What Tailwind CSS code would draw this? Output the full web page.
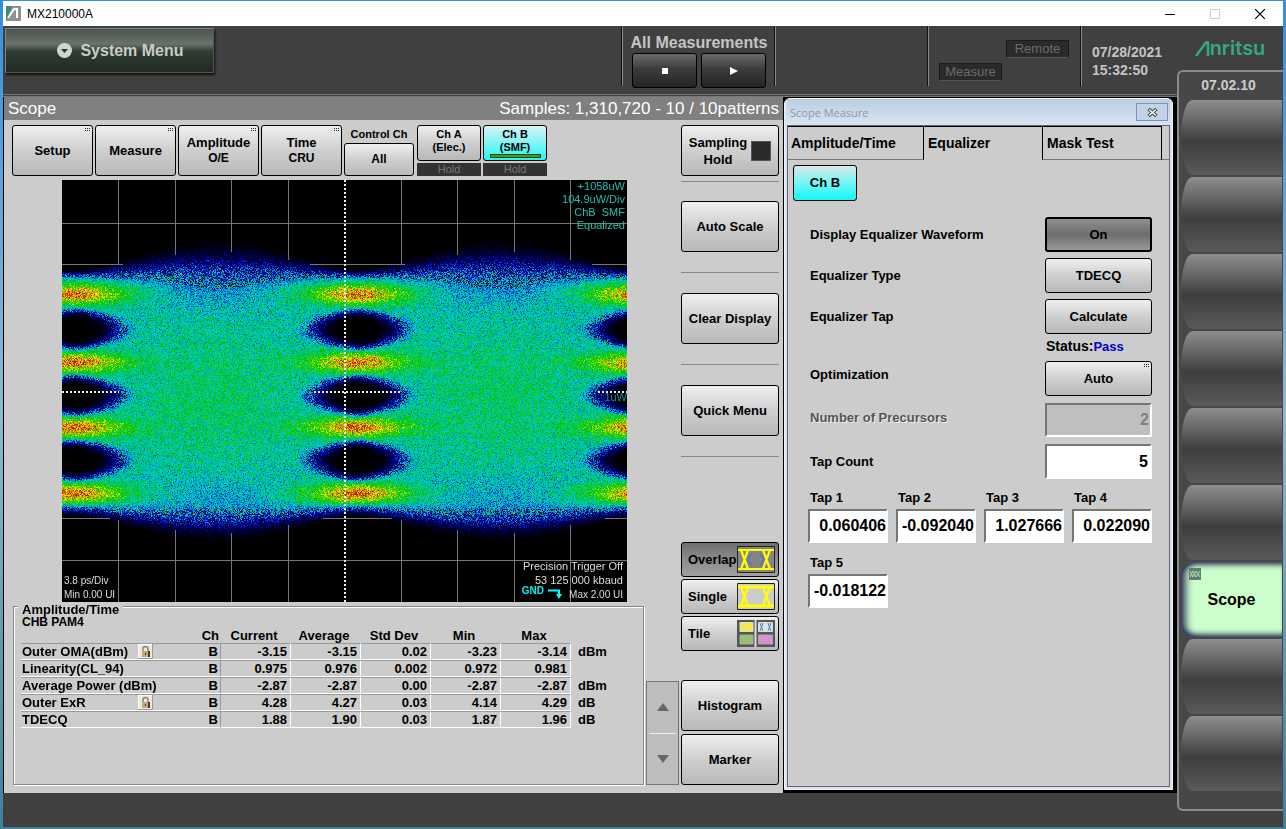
<!DOCTYPE html>
<html lang="en">

<head>
    <meta charset="UTF-8">
    <meta name="viewport" content="width=device-width, initial-scale=1.0">
    <title>MX210000A</title>
    <script src="https://cdn.jsdelivr.net/npm/@tailwindcss/browser@4"></script>
    <style>
        body {
            font-family: 'Liberation Sans', Arial, sans-serif;
        }
    </style>
</head>

<body class="flex h-screen flex-col bg-linear-to-b from-[#2f8fe0] via-[#8fb9cf] to-[#3f8099] pt-px pr-[3px] pb-[2px] pl-[3px] text-[13px] font-bold text-black">
    <svg class="hidden">
        <symbol id="dots" viewBox="0 0 5 3">
            <path d="M0 0h1v1H0zM2 0h1v1H2zM4 0h1v1H4zM0 2h1v1H0zM2 2h1v1H2zM4 2h1v1H4z" fill="#222" />
        </symbol>
        <symbol id="lock" viewBox="0 0 15 15">
            <path d="M0 0h15v15H0z" fill="#eee9dd" />
            <path d="M.5 14.500V.5h14" fill="none" stroke="#fff" />
            <path d="M14.500 0v14.500H0" fill="none" stroke="#999" />
            <path d="M5 7V5a2.500 2.500 0 0 1 5 0v2" fill="none" stroke="#8a8578" stroke-width="1.500" />
            <path d="M4 7h7v6H4z" fill="#c9a877" />
            <path d="M10 7h2v6h-2z" fill="#4a3a22" />
            <path d="M7 9h1v2H7z" fill="#4a3a22" />
        </symbol>
    </svg>

    <header class="flex h-[25px] shrink-0 items-center bg-white pl-[3px]">
        <svg class="h-[15px] w-[15px]" viewBox="0 0 15 15">
            <path d="M0 0h15v15H0z" fill="#8b9490" />
            <path d="M0 0h6L0 15z" fill="#3d8a78" />
            <path d="M2 12L8 3h3v9" fill="none" stroke="#fff" stroke-width="2" />
        </svg>
        <h1 class="ml-1.5 flex-1 text-[12px] font-normal">MX210000A</h1>
        <button aria-label="Minimize" class="flex w-[45px] justify-center">
            <svg class="h-2.5 w-2.5" viewBox="0 0 10 10"><path d="M0 5.500h10" stroke="#000" /></svg>
        </button>
        <button aria-label="Maximize" class="flex w-[45px] justify-center">
            <svg class="h-2.5 w-2.5" viewBox="0 0 10 10"><path d="M.5.5h9v9h-9z" fill="none" stroke="#ccc" /></svg>
        </button>
        <button aria-label="Close" class="flex w-[46px] justify-center">
            <svg class="h-2.5 w-2.5" viewBox="0 0 10 10"><path d="M0 0l10 10M10 0L0 10" stroke="#000" stroke-width="1.200" /></svg>
        </button>
    </header>

    <div class="flex min-h-0 flex-1 bg-[#404040]">
        <div class="flex min-w-0 flex-1 flex-col">
            <!-- top bar -->
            <div class="flex h-[71px] shrink-0 border-b-[3px] border-double border-[#777] text-[#c4c4c4]">
                <button class="mt-0.5 ml-0.5 flex h-[45px] w-[209px] items-center justify-center gap-2 border border-[#7d857d] border-r-[#555] border-b-[#555] bg-[linear-gradient(#4b544c,#6a736b_35%,#303c32_52%,#202a22)] pl-[22px] text-[16px] text-[#c8cdc8] shadow-[1px_2px_2px_#111]">
                    <svg class="h-[15px] w-[15px]" viewBox="0 0 15 15">
                        <circle cx="7.500" cy="7.500" r="7.500" fill="#d0d5d0" />
                        <path d="M4 6h7l-3.500 4z" fill="#2c382f" />
                    </svg>
                    System Menu
                </button>
                <div class="flex-1"></div>
                <div class="flex h-[60px] w-[154px] flex-col items-center border-x border-[#8a8a8a] pt-[7px] shadow-[-1px_0_0_#111,inset_-1px_0_0_#111]">
                    <h2 class="h-[22px] text-[16px] leading-[20px]">All Measurements</h2>
                    <div class="flex gap-1">
                        <button aria-label="Stop" class="flex h-[35px] w-[65px] items-center justify-center rounded-[3px] border border-black bg-[linear-gradient(#6c6c6c,#3c3c3c_45%,#242424)]">
                            <svg class="h-1.5 w-1.5" viewBox="0 0 6 6"><path d="M0 0h6v6H0z" fill="#fff" /></svg>
                        </button>
                        <button aria-label="Run" class="flex h-[35px] w-[65px] items-center justify-center rounded-[3px] border border-black bg-[linear-gradient(#6c6c6c,#3c3c3c_45%,#242424)]">
                            <svg class="h-2 w-2" viewBox="0 0 8 8"><path d="M0 0l8 4-8 4z" fill="#fff" /></svg>
                        </button>
                    </div>
                </div>
                <div class="w-[152px]"></div>
                <div class="flex h-[60px] w-[154px] flex-col border-x border-[#8a8a8a] pt-[14px] pr-3 pl-2.5 font-normal text-[#6c6c6c] shadow-[-1px_0_0_#111,inset_-1px_0_0_#111]">
                    <span class="h-[18px] w-[63px] self-end border border-[#1c1c1c] border-b-[#555] bg-[#2a2a2a] text-center leading-[16px]">Remote</span>
                    <span class="mt-[5px] h-[18px] w-[63px] border border-[#1c1c1c] border-b-[#555] bg-[#2a2a2a] text-center leading-[16px]">Measure</span>
                </div>
                <p class="w-[95px] pt-[17px] pl-2.5 text-[14px] leading-[18px]">07/28/2021<br>15:32:50</p>
            </div>

            <div class="flex min-h-0 flex-1 bg-black pr-1 pl-px">
                <!-- scope -->
                <section class="flex min-w-0 flex-1 flex-col bg-[#ccc]">
                    <div class="flex h-[23px] shrink-0 items-center justify-between bg-[#808080] px-1 text-[17px] font-normal text-white">
                        <h2>Scope</h2>
                        <span>Samples: 1,310,720 - 10 / 10patterns</span>
                    </div>
                    <div class="flex min-h-0 flex-1 gap-0.5 px-1 pt-[5px] pb-2">
                        <div class="flex min-w-0 flex-1 flex-col pl-1">
                            <div class="flex h-[51px] shrink-0 gap-0.5 leading-[15px]">
                                <button class="relative w-[81px] rounded-[3px] border border-black bg-[linear-gradient(#efefef,#cfcfcf_50%,#b8b8b8)]">Setup
                                    <svg class="absolute top-0.5 right-0.5 h-[3px] w-[5px]"><use href="#dots" /></svg>
                                </button>
                                <button class="relative w-[81px] rounded-[3px] border border-black bg-[linear-gradient(#efefef,#cfcfcf_50%,#b8b8b8)]">Measure
                                    <svg class="absolute top-0.5 right-0.5 h-[3px] w-[5px]"><use href="#dots" /></svg>
                                </button>
                                <button class="relative w-[81px] rounded-[3px] border border-black bg-[linear-gradient(#efefef,#cfcfcf_50%,#b8b8b8)]">Amplitude<br><span class="text-[12px]">O/E</span>
                                    <svg class="absolute top-0.5 right-0.5 h-[3px] w-[5px]"><use href="#dots" /></svg>
                                </button>
                                <button class="relative w-[81px] rounded-[3px] border border-black bg-[linear-gradient(#efefef,#cfcfcf_50%,#b8b8b8)]">Time<br><span class="text-[12px]">CRU</span>
                                    <svg class="absolute top-0.5 right-0.5 h-[3px] w-[5px]"><use href="#dots" /></svg>
                                </button>
                                <div class="flex w-[70px] flex-col text-[11px]">
                                    <label for="control-ch" class="h-[18px] text-center leading-[18px]">Control Ch</label>
                                    <button id="control-ch" class="flex-1 rounded-[3px] border border-black bg-[linear-gradient(#efefef,#cfcfcf_50%,#b8b8b8)] text-[12px]">All</button>
                                </div>
                                <div class="ml-px flex w-16 flex-col gap-0.5 text-[11px] leading-[13px]">
                                    <button class="h-9 rounded-[3px] border border-black bg-[linear-gradient(#efefef,#cfcfcf_50%,#b8b8b8)] pb-1">Ch A<br>(Elec.)</button>
                                    <button disabled class="flex-1 bg-[#333] font-normal text-[#777]">Hold</button>
                                </div>
                                <div class="flex w-16 flex-col gap-0.5 text-[11px] leading-[13px]">
                                    <button class="h-9 rounded-[3px] border border-black bg-[linear-gradient(#d8f4f4,#7ff5f5_50%,#28f4f4)]">Ch B<br>(SMF)
                                        <span class="mx-auto block h-1 w-[51px] border border-[#1d4a10] bg-[#4a9a20]"></span>
                                    </button>
                                    <button disabled class="flex-1 bg-[#333] font-normal text-[#777]">Hold</button>
                                </div>
                            </div>

                            <!-- eye diagram -->
                            <div class="relative mt-1 mr-[17px] ml-[50px] min-h-0 flex-1 bg-black text-[11px] font-normal">
                                <canvas id="eye" width="565" height="422" class="block h-full w-full"></canvas>
                                <p class="absolute top-0 right-0.5 text-right leading-[13px] text-[#20c0b0]">+1058uW<br>104.9uW/Div<br>ChB&nbsp; SMF<br>Equalized</p>
                                <p class="absolute top-[209px] right-0 text-[#1890a0]">1uW</p>
                                <p class="absolute bottom-0 left-0.5 text-[10px] leading-[14px] text-[#ddd]">3.8 ps/Div<br>Min 0.00 UI</p>
                                <p class="absolute right-1 bottom-0 text-right text-[11px] leading-[14px] text-[#ddd]">Precision Trigger Off<br>53 125 000 kbaud<br><span class="text-[10px]">Max 2.00 UI</span></p>
                                <p class="absolute right-[65px] bottom-[3px] flex items-center gap-1 text-[10px] leading-[14px] font-bold text-[#00f0f0]">GND
                                    <svg class="mt-1.5 h-[10px] w-[14px]" viewBox="0 0 14 10"><path d="M0 1.500h11V6" fill="none" stroke="#0ff" stroke-width="2" /><path d="M8 5h6l-3 5z" fill="#0ff" /></svg>
                                </p>
                            </div>

                            <fieldset class="relative mt-1 ml-px h-[179px] shrink-0 border border-[#888] pt-[9px] pl-[7px] shadow-[1px_1px_0_#fff,inset_1px_1px_0_#fff]">
                                <legend class="absolute -top-1 left-1 bg-[#ccc] px-1 leading-[13px]">Amplitude/Time</legend>
                                <p class="pl-px text-[12px] leading-[13px]">CHB PAM4</p>
                                <table class="border-separate border-spacing-0 text-right text-[13px] leading-[15px]">
                                    <thead>
                                        <tr class="h-[14px] text-center leading-[12px]">
                                            <th class="w-[160px]"></th>
                                            <th class="w-10 pr-0.5 text-right">Ch</th>
                                            <th class="w-[70px] pr-1">Current</th>
                                            <th class="w-[70px] pr-1">Average</th>
                                            <th class="w-[70px] pr-1">Std Dev</th>
                                            <th class="w-[70px] pr-1">Min</th>
                                            <th class="w-[70px] pr-1">Max</th>
                                            <th></th>
                                        </tr>
                                    </thead>
                                    <tbody id="results"></tbody>
                                </table>
                            </fieldset>
                        </div>

                        <div class="mt-auto flex h-[104px] w-[33px] flex-col border border-[#777] bg-[#bdbdbd]">
                            <button aria-label="Scroll up" class="mx-0.5 flex flex-1 items-center justify-center border-b border-[#eee]">
                                <svg class="h-2 w-3" viewBox="0 0 12 8"><path d="M6 0l6 8H0z" fill="#666" /></svg>
                            </button>
                            <button aria-label="Scroll down" class="flex flex-1 items-center justify-center">
                                <svg class="h-2 w-3" viewBox="0 0 12 8"><path d="M0 0h12L6 8z" fill="#666" /></svg>
                            </button>
                        </div>

                        <div class="flex w-[98px] shrink-0 flex-col">
                            <button class="flex h-[51px] items-center justify-center gap-1 rounded-[3px] border border-black bg-[linear-gradient(#efefef,#cfcfcf_50%,#b8b8b8)] leading-[17px]">
                                <span>Sampling<br>Hold</span>
                                <span class="h-5 w-5 border border-[#555] bg-[#2b2b2b]"></span>
                            </button>
                            <hr class="mt-[5px] mb-[19px] border-[#888]">
                            <button class="h-[51px] rounded-[3px] border border-black bg-[linear-gradient(#efefef,#cfcfcf_50%,#b8b8b8)]">Auto Scale</button>
                            <hr class="my-5 border-[#888]">
                            <button class="h-[51px] rounded-[3px] border border-black bg-[linear-gradient(#efefef,#cfcfcf_50%,#b8b8b8)]">Clear Display</button>
                            <hr class="my-5 border-[#888]">
                            <button class="h-[51px] rounded-[3px] border border-black bg-[linear-gradient(#efefef,#cfcfcf_50%,#b8b8b8)]">Quick Menu</button>
                            <hr class="mt-5 border-[#888]">

                            <div class="mt-auto flex flex-col gap-0.5">
                                <button class="flex h-[35px] items-center justify-between rounded-[3px] border border-black bg-[linear-gradient(#6f6f6f,#8c8c8c_50%,#a0a0a0)] pr-[3px] pl-1.5">Overlap
                                    <svg class="-ml-2 h-[27px] w-[38px] shrink-0" viewBox="0 0 38 27">
                                        <path d="M.5.5h37v26H.5z" fill="#858585" stroke="#222" />
                                        <path d="M11 13l4-6M11 13l4 7M27 13l-4-6M27 13l-4 7" fill="none" stroke="#4a78c8" stroke-width="1.500" />
                                        <path d="M1 4h36M1 23h36M4 4l7 19M11 4L4 23M26 4l7 19M33 4l-7 19" stroke="#ff0" stroke-width="2.200" />
                                    </svg>
                                </button>
                                <button class="flex h-[35px] items-center justify-between rounded-[3px] border border-black bg-[linear-gradient(#efefef,#cfcfcf_50%,#b8b8b8)] pr-[3px] pl-1.5">Single
                                    <svg class="h-[27px] w-[38px]" viewBox="0 0 38 27">
                                        <path d="M.5.5h37v26H.5z" fill="#ccc" stroke="#222" />
                                        <path d="M1 4h36M1 23h36" stroke="#ff0" stroke-width="3" />
                                        <path d="M4 4l7 19M11 4L4 23M26 4l7 19M33 4l-7 19" stroke="#ff0" stroke-width="2.200" />
                                    </svg>
                                </button>
                                <button class="flex h-[35px] items-center justify-between rounded-[3px] border border-black bg-[linear-gradient(#efefef,#cfcfcf_50%,#b8b8b8)] pr-[3px] pl-1.5">Tile
                                    <svg class="h-[27px] w-[38px]" viewBox="0 0 38 27">
                                        <path d="M0 0h38v27H0z" fill="#555" />
                                        <path d="M18.500 0v27" stroke="#ddd" stroke-width="2" />
                                        <path d="M3 2.500h13v9H3z" fill="#f0e850" stroke="#ddd" />
                                        <path d="M21.500 2.500h14v9h-14z" fill="#d8e4f0" stroke="#ddd" />
                                        <path d="M3 15h13v9H3z" fill="#98c070" stroke="#aaa" />
                                        <path d="M21.500 15h14v9h-14z" fill="#d890d0" stroke="#aaa" />
                                        <path d="M23 3l3 8M26 3l-3 8M31 3l3 8M34 3l-3 8" stroke="#4a80b0" fill="none" />
                                    </svg>
                                </button>
                            </div>
                            <div class="mt-[29px] flex flex-col gap-[3px]">
                                <button class="h-[51px] rounded-[3px] border border-black bg-[linear-gradient(#efefef,#cfcfcf_50%,#b8b8b8)]">Histogram</button>
                                <button class="h-[51px] rounded-[3px] border border-black bg-[linear-gradient(#efefef,#cfcfcf_50%,#b8b8b8)]">Marker</button>
                            </div>
                        </div>
                    </div>
                </section>

                <!-- measure dialog -->
                <section class="mt-px mb-[3px] ml-px flex w-[389px] shrink-0 flex-col rounded-t-md border border-[#eef3f8] bg-[#d9e2ec] px-0.5 pb-0.5">
                    <div class="flex h-[26px] shrink-0 items-center justify-between bg-linear-to-b from-[#bccde0] to-[#d8e5f3] pr-0.5 pl-[3px]">
                        <h2 class="pt-0.5 font-['Open_Sans'] text-[11px] font-normal text-[#8f979f]">Scope Measure</h2>
                        <button aria-label="Close" class="flex h-[18px] w-8 items-center justify-center border border-[#7c93b5] bg-[#c3d3e6]">
                            <svg class="h-[9px] w-[11px]" viewBox="0 0 11 9">
                                <path d="M1.500 1l8 7M9.500 1l-8 7" stroke="#444" stroke-width="3.500" />
                                <path d="M2 1.500l7 6M9 1.500l-7 6" stroke="#fff" stroke-width="1.500" />
                            </svg>
                        </button>
                    </div>
                    <div class="flex min-h-0 flex-1 flex-col border border-[#667] bg-[#ccc]">
                        <div class="flex h-[34px] shrink-0 text-[14px]">
                            <button class="w-[136px] border-t border-r border-b border-black border-b-[#777] pl-[3px] text-left">Amplitude/Time</button>
                            <button class="w-[118px] border-t border-black pl-1 text-left">Equalizer</button>
                            <button class="w-[120px] border border-black border-b-[#777] pl-1 text-left">Mask Test</button>
                            <div class="flex-1 border-b border-[#777]"></div>
                        </div>
                        <div class="px-[5px] pt-[5px]">
                            <button class="h-9 w-16 rounded-[3px] border border-black bg-[linear-gradient(#d8e8e8,#7ff5f5_45%,#10f8f8)]">Ch B</button>
                        </div>
                        <div class="mt-4 flex flex-col gap-1.5 pr-[17px] pl-[22px]">
                            <div class="flex h-[35px] items-center justify-between">
                                <label for="display">Display Equalizer Waveform</label>
                                <button id="display" class="h-[35px] w-[107px] rounded-[3px] border-2 border-black bg-[linear-gradient(#8f8f8f,#6e6e6e_50%,#989898)]">On</button>
                            </div>
                            <div class="flex h-[35px] items-center justify-between">
                                <label for="type">Equalizer Type</label>
                                <button id="type" class="h-[35px] w-[107px] rounded-[3px] border border-black bg-[linear-gradient(#efefef,#cfcfcf_50%,#b8b8b8)]">TDECQ</button>
                            </div>
                            <div class="flex h-[35px] items-center justify-between">
                                <label for="tap">Equalizer Tap</label>
                                <button id="tap" class="h-[35px] w-[107px] rounded-[3px] border border-black bg-[linear-gradient(#efefef,#cfcfcf_50%,#b8b8b8)]">Calculate</button>
                            </div>
                            <p class="h-[15px] w-[107px] self-end pl-px text-[14px] leading-[12px]">Status:<span class="text-[13px] text-[#0000c8]">Pass</span></p>
                            <div class="flex h-[35px] items-center justify-between">
                                <label for="optimization" class="pb-2">Optimization</label>
                                <button id="optimization" class="relative h-[35px] w-[107px] rounded-[3px] border border-black bg-[linear-gradient(#efefef,#cfcfcf_50%,#b8b8b8)]">Auto
                                    <svg class="absolute top-0.5 right-0.5 h-[3px] w-[5px]"><use href="#dots" /></svg>
                                </button>
                            </div>
                            <div class="flex h-9 items-center justify-between">
                                <label for="precursors" class="pb-1 text-[#555] text-shadow-[1px_1px_0_#eee]">Number of Precursors</label>
                                <input id="precursors" type="text" value="2" disabled class="h-[34px] w-[107px] border-2 border-[#77776d] border-r-white border-b-white bg-[#bfbfbf] pr-px text-right text-[16px] text-[#808080]">
                            </div>
                            <div class="flex h-[35px] items-center justify-between">
                                <label for="count">Tap Count</label>
                                <input id="count" type="text" value="5" class="h-[35px] w-[107px] border-2 border-[#77776d] border-r-white border-b-white bg-white pr-0.5 text-right text-[16px]">
                            </div>
                        </div>
                        <div class="mt-[11px] grid grid-cols-[repeat(4,80px)] gap-x-2 gap-y-3 pl-5 leading-[15px]">
                            <div class="flex flex-col gap-1">
                                <label for="tap1" class="pl-0.5">Tap 1</label>
                                <input id="tap1" type="text" value="0.060406" class="h-[34px] w-full border-2 border-[#77776d] border-r-white border-b-white bg-white text-right text-[16px]">
                            </div>
                            <div class="flex flex-col gap-1">
                                <label for="tap2" class="pl-0.5">Tap 2</label>
                                <input id="tap2" type="text" value="-0.092040" class="h-[34px] w-full border-2 border-[#77776d] border-r-white border-b-white bg-white text-right text-[16px]">
                            </div>
                            <div class="flex flex-col gap-1">
                                <label for="tap3" class="pl-0.5">Tap 3</label>
                                <input id="tap3" type="text" value="1.027666" class="h-[34px] w-full border-2 border-[#77776d] border-r-white border-b-white bg-white text-right text-[16px]">
                            </div>
                            <div class="flex flex-col gap-1">
                                <label for="tap4" class="pl-0.5">Tap 4</label>
                                <input id="tap4" type="text" value="0.022090" class="h-[34px] w-full border-2 border-[#77776d] border-r-white border-b-white bg-white text-right text-[16px]">
                            </div>
                            <div class="flex flex-col gap-1">
                                <label for="tap5" class="pl-0.5">Tap 5</label>
                                <input id="tap5" type="text" value="-0.018122" class="h-[34px] w-full border-2 border-[#77776d] border-r-white border-b-white bg-white text-right text-[16px]">
                            </div>
                        </div>
                    </div>
                </section>
            </div>
            <footer class="h-[34px] shrink-0"></footer>
        </div>

        <!-- application selector -->
        <aside class="flex w-[106px] shrink-0 flex-col pb-4">
            <div class="flex h-[44px] shrink-0 items-center justify-center font-['Inter'] text-[20px] font-semibold text-[#35a882]" role="img" aria-label="Anritsu">
                <svg class="h-[15px] w-[15px]" viewBox="0 0 15 15"><path d="M1 15L11 1.500h2V15" fill="none" stroke="#35a882" stroke-width="2.600" /></svg>
                <span class="leading-none">nritsu</span>
            </div>
            <nav class="flex flex-1 flex-col gap-0.5 rounded-l-md border-2 border-r-0 border-[#8c8c8c] bg-[#474747] pr-px pl-0.5">
                <p class="h-[26px] pr-1.5 text-center text-[14px] leading-[26px] text-[#ccc]">07.02.10</p>
                <button aria-label="Slot 1" class="h-[75px] rounded-l-[12px_40px] bg-[linear-gradient(#8e8e92,#6a6a6a_25%,#3e3e3e_55%,#5a5a5a)]"></button>
                <button aria-label="Slot 2" class="h-[75px] rounded-l-[12px_40px] bg-[linear-gradient(#8e8e92,#6a6a6a_25%,#3e3e3e_55%,#5a5a5a)]"></button>
                <button aria-label="Slot 3" class="h-[75px] rounded-l-[12px_40px] bg-[linear-gradient(#8e8e92,#6a6a6a_25%,#3e3e3e_55%,#5a5a5a)]"></button>
                <button aria-label="Slot 4" class="h-[75px] rounded-l-[12px_40px] bg-[linear-gradient(#8e8e92,#6a6a6a_25%,#3e3e3e_55%,#5a5a5a)]"></button>
                <button aria-label="Slot 5" class="h-[75px] rounded-l-[12px_40px] bg-[linear-gradient(#8e8e92,#6a6a6a_25%,#3e3e3e_55%,#5a5a5a)]"></button>
                <button aria-label="Slot 6" class="h-[75px] rounded-l-[12px_40px] bg-[linear-gradient(#8e8e92,#6a6a6a_25%,#3e3e3e_55%,#5a5a5a)]"></button>
                <button class="relative h-[75px] rounded-l-xl bg-[#ccffcc] text-[16px] shadow-[inset_8px_0_8px_-4px_#1c1c50,inset_0_7px_6px_-5px_#1c1c50,inset_0_-7px_6px_-5px_#1c1c50]">Scope
                    <svg class="absolute top-1.5 left-2 h-3 w-3" viewBox="0 0 12 12"><path d="M0 0h12v12H0z" fill="#5f7f68" /><path d="M1 3l3 6 3-6 4 6M1 9l3-6 3 6 4-6" fill="none" stroke="#b8dcc0" /></svg>
                </button>
                <button aria-label="Slot 8" class="h-[75px] rounded-l-[12px_40px] bg-[linear-gradient(#8e8e92,#6a6a6a_25%,#3e3e3e_55%,#5a5a5a)]"></button>
                <button aria-label="Slot 9" class="h-[75px] rounded-l-[12px_40px] bg-[linear-gradient(#8e8e92,#6a6a6a_25%,#3e3e3e_55%,#5a5a5a)]"></button>
            </nav>
        </aside>
    </div>

    <script>
        const rows = [
            ['Outer OMA(dBm)', true, ['-3.15', '-3.15', '0.02', '-3.23', '-3.14'], 'dBm'],
            ['Linearity(CL_94)', false, ['0.975', '0.976', '0.002', '0.972', '0.981'], ''],
            ['Average Power (dBm)', false, ['-2.87', '-2.87', '0.00', '-2.87', '-2.87'], 'dBm'],
            ['Outer ExR', true, ['4.28', '4.27', '0.03', '4.14', '4.29'], 'dB'],
            ['TDECQ', false, ['1.88', '1.90', '0.03', '1.87', '1.96'], 'dB'],
        ];
        const lock = '<svg class="absolute top-0 left-[117px] h-[15px] w-[15px]"><use href="#lock" /></svg>';
        document.getElementById('results').innerHTML = rows.map(([name, locked, values, unit]) => `
            <tr class="h-[17px]">
                <th class="relative border-t border-b border-t-[#999] border-b-white pl-px text-left whitespace-nowrap">${name}${locked ? lock : ''}</th>
                <td class="border-t border-r border-b border-[#999] border-b-white pr-0.5">B</td>
                ${values.map(v => `<td class="border-t border-r border-b border-white border-t-[#999] pr-[3px]">${v}</td>`).join('')}
                <td class="pl-[7px] text-left">${unit}</td>
            </tr>`).join('');

        // Eye diagram: PAM4 hit density, drawn as a noisy heat map
        const canvas = document.getElementById('eye');
        const ctx = canvas.getContext('2d');
        const W = canvas.width, H = canvas.height;
        const image = ctx.createImageData(W, H);
        const LEVELS = [114, 182, 247, 313];
        const EYES = [149, 215, 280];
        const PERIOD = 282, CENTER = 295;
        const STOPS = [
            [0, 0, 0, 0], [0.12, 0, 0, 60], [0.26, 0, 0, 190], [0.38, 0, 90, 190], [0.5, 0, 200, 215],
            [0.58, 0, 205, 150], [0.65, 0, 190, 10], [0.78, 60, 215, 0], [0.86, 240, 235, 0], [0.94, 230, 110, 0], [1.02, 190, 20, 0],
        ];

        let seed = 12345;
        function rand() {
            seed = (seed * 1664525 + 1013904223) >>> 0;
            return seed / 4294967296;
        }

        function colour(v) {
            if (v <= 0) return [0, 0, 0];
            for (let i = 1; i < STOPS.length; i++) {
                if (v < STOPS[i][0]) {
                    const a = STOPS[i - 1], b = STOPS[i];
                    const t = (v - a[0]) / (b[0] - a[0]);
                    return [a[1] + (b[1] - a[1]) * t, a[2] + (b[2] - a[2]) * t, a[3] + (b[3] - a[3]) * t];
                }
            }
            return [190, 20, 0];
        }

        function ramp(a, b, x) {
            const t = Math.min(1, Math.max(0, (x - a) / (b - a)));
            return t * t * (3 - 2 * t);
        }

        for (let y = 0; y < H; y++) {
            for (let x = 0; x < W; x++) {
                let dx = (x - CENTER) % PERIOD;
                if (dx > PERIOD / 2) dx -= PERIOD;
                if (dx < -PERIOD / 2) dx += PERIOD;
                const u = (1 - Math.cos(2 * Math.PI * dx / PERIOD)) / 2;
                const spread = Math.pow(u, 0.75);

                // body: green in the middle, cyan towards the rails
                const my = (y - 218) / 85;
                let v = 0.525 + 0.085 * u * Math.exp(-my * my * 1.5);
                for (const l of LEVELS) {
                    const d = (y - l) / 10;
                    v += Math.exp(-d * d) * (0.34 * Math.exp(-Math.pow(dx / 42, 2)) + 0.09 * Math.exp(-Math.pow(dx / 80, 4)));
                }
                v -= 0.09 * u * u * (Math.exp(-Math.pow((y - 108) / 20, 2)) + 0.8 * Math.exp(-Math.pow((y - 316) / 20, 2)));

                // outer edges, softer between the eyes
                v *= ramp(88 - 32 * spread, 101 + 16 * spread, y);
                v *= 1 - ramp(320 - 2 * spread, 338 + 26 * spread, y);

                // openings
                for (const e of EYES) {
                    const r = Math.pow(Math.abs(dx) / 49, 1.3) + Math.pow(Math.abs(y - e) / 20, 2);
                    v *= ramp(0.25, 1.45, r);
                }

                // sparse areas get isolated hits, dense areas an even grain
                const n = rand() + rand() - 1;
                const noisy = v < 0.008 ? 0 : v + n * (v < 0.42 ? 0.05 + v * 0.95 : 0.19);
                let c = colour(noisy);
                if (v < 0.08) {
                    const vertical = [56, 113, 169, 226, 339, 395, 452, 508].includes(x);
                    const horizontal = [43, 84, 338, 380].includes(y);
                    const inEye = y > 120 && y < 310;
                    if (!inEye && (vertical || horizontal)) c = [118, 118, 118];
                }
                if ((x === 282 || x === 283) && y % 4 < 2) c = [240, 240, 240];
                if ((y === 211 || y === 212) && x % 4 < 2 && v < 0.3) c = [240, 240, 240];

                const i = (y * W + x) * 4;
                image.data[i] = c[0];
                image.data[i + 1] = c[1];
                image.data[i + 2] = c[2];
                image.data[i + 3] = 255;
            }
        }
        ctx.putImageData(image, 0, 0);
    </script>
</body>

</html>
